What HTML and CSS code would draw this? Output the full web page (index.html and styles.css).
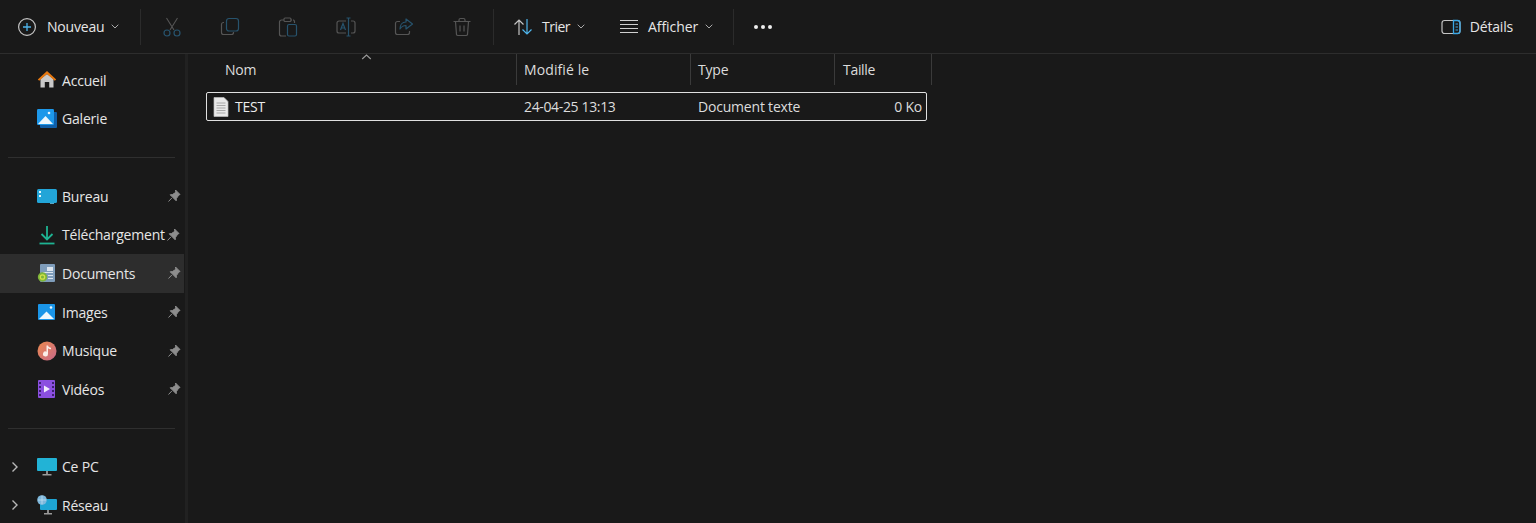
FILE: index.html
```html
<!DOCTYPE html>
<html lang="fr">
<head>
<meta charset="utf-8">
<title>Documents</title>
<link rel="stylesheet" href="styles.css">
</head>
<body>
<div class="app">
  <header class="toolbar">
    <button class="tb-new">
      <svg class="ico20" viewBox="0 0 20 20"><circle cx="10" cy="10" r="8.4" fill="none" stroke="#c4c4c4" stroke-width="1.2"/><path d="M10 6v8M6 10h8" stroke="#4fb4ea" stroke-width="1.3"/></svg>
      <span class="tb-label">Nouveau</span>
      <svg class="chev" viewBox="0 0 8 5"><path d="M.7.7 4 4l3.3-3.3" fill="none" stroke="#aaa" stroke-width="1"/></svg>
    </button>
    <span class="sep"></span>
    <div class="iconset">
      <button class="tb-icon"><svg class="ico20" viewBox="0 0 20 20"><path d="M4.5 1 12 13M15.500 1 8 13" fill="none" stroke="#555" stroke-width="1.1"/><circle cx="5" cy="16" r="3" fill="none" stroke="#27536d" stroke-width="1.2"/><circle cx="15" cy="16" r="3" fill="none" stroke="#27536d" stroke-width="1.2"/></svg></button>
      <button class="tb-icon"><svg class="ico20" viewBox="0 0 20 20"><path d="M4 5.500H3.500A2 2 0 0 0 1.500 7.500v8a2 2 0 0 0 2 2h8a2 2 0 0 0 2-2V15" fill="none" stroke="#555" stroke-width="1.200"/><rect x="6.500" y="1.500" width="12" height="12.500" rx="2.500" fill="none" stroke="#27536d" stroke-width="1.200"/></svg></button>
      <button class="tb-icon"><svg class="ico20" viewBox="0 0 20 20"><path d="M6 3H3.500a2 2 0 0 0-2 2v12a2 2 0 0 0 2 2H8M14 3h-1.500M15 3h.5a2 2 0 0 1 1 1.500V6" fill="none" stroke="#555" stroke-width="1.200"/><rect x="6" y="1" width="7" height="3.500" rx="1" fill="none" stroke="#555" stroke-width="1.100"/><rect x="9.500" y="7.500" width="9" height="11.500" rx="1.500" fill="none" stroke="#27536d" stroke-width="1.200"/></svg></button>
      <button class="tb-icon"><svg class="ico20" viewBox="0 0 20 20"><path d="M10 4H3A2 2 0 0 0 1 6v8a2 2 0 0 0 2 2h7M15 4h2a2 2 0 0 1 2 2v8a2 2 0 0 1-2 2h-2" fill="none" stroke="#555" stroke-width="1.200"/><path d="M10.500 1h4M12.500 1v18M10.500 19h4M4.500 13l2.500-6.500L9.500 13M5.300 11h3.400" fill="none" stroke="#27536d" stroke-width="1.200"/></svg></button>
      <button class="tb-icon"><svg class="ico20" viewBox="0 0 20 20"><path d="M6 4.500H3.500a2 2 0 0 0-2 2v9a2 2 0 0 0 2 2h10a2 2 0 0 0 2-2V14" fill="none" stroke="#555" stroke-width="1.200"/><path d="M12 2v3C8 5 6 8 6 12c1.500-2.500 3-3.500 6-3.500V12l6.500-5z" fill="none" stroke="#27536d" stroke-width="1.200" stroke-linejoin="round"/></svg></button>
      <button class="tb-icon"><svg class="ico20" viewBox="0 0 20 20"><path d="M1.500 4.500h17M7 4.500V3a1.500 1.500 0 0 1 1.500-1.500h3A1.500 1.500 0 0 1 13 3v1.500M3.500 4.500l1 13a1.500 1.500 0 0 0 1.500 1h8a1.500 1.500 0 0 0 1.500-1l1-13M8 8.500v6M12 8.500v6" fill="none" stroke="#555" stroke-width="1.200"/></svg></button>
    </div>
    <span class="sep"></span>
    <button class="tb-btn tb-sort">
      <svg class="ico20" viewBox="0 0 20 20"><path d="M6 18V3M1.500 7.500 6 3l4.500 4.500" fill="none" stroke="#c4c4c4" stroke-width="1.200"/><path d="M14 2v15M9.500 12.500 14 17l4.500-4.500" fill="none" stroke="#4fb4ea" stroke-width="1.200"/></svg>
      <span class="tb-label tb-label-sort">Trier</span>
      <svg class="chev" viewBox="0 0 8 5"><path d="M.7.7 4 4l3.300-3.300" fill="none" stroke="#aaa" stroke-width="1"/></svg>
    </button>
    <button class="tb-btn tb-view">
      <svg class="ico20" viewBox="0 0 20 20"><path d="M1 3.500h18M1 7.500h18M1 11.500h18M1 15.500h18" stroke="#d0d0d0" stroke-width="1.200"/></svg>
      <span class="tb-label tb-label-view">Afficher</span>
      <svg class="chev" viewBox="0 0 8 5"><path d="M.7.7 4 4l3.300-3.300" fill="none" stroke="#aaa" stroke-width="1"/></svg>
    </button>
    <span class="sep"></span>
    <button class="tb-more"><span class="dot"></span><span class="dot"></span><span class="dot"></span></button>
    <button class="tb-details">
      <svg class="ico20" viewBox="0 0 20 20"><rect x="1" y="3.500" width="18" height="13" rx="2.500" fill="none" stroke="#c4c4c4" stroke-width="1.200"/><path d="M12.500 3.500h4A2.500 2.500 0 0 1 19 6v8a2.500 2.500 0 0 1-2.500 2.500h-4z" fill="none" stroke="#3aa6e4" stroke-width="1.300"/><path d="M14.500 7h2.500M14.500 10h2.500M14.500 13h2.500" stroke="#3aa6e4"/></svg>
      <span class="tb-label">Détails</span>
    </button>
  </header>

  <div class="body">
    <nav class="side">
      <ul class="nav-list">
        <li class="nav-row"><span class="twist"></span><svg class="nav-ico" viewBox="0 0 20 20"><path d="M3.500 9 10 4l6.500 5v8.500h-4.300V12H7.800v5.500H3.500z" fill="#c9c9c9"/><path d="M10 1 .8 9.500l1.400 1.300L10 4l7.800 6.800 1.400-1.300z" fill="#e8780f"/></svg><span class="nav-text">Accueil</span></li>
        <li class="nav-row"><span class="twist"></span><svg class="nav-ico" viewBox="0 0 20 20"><rect x="3" y="3" width="17" height="16" rx="1" fill="#0f5ea8"/><rect x="0" y="0" width="17" height="16" rx="1.200" fill="#1d98ea"/><path d="M1 15 8.500 7 16 15z" fill="#eef7fd"/><circle cx="12" cy="4" r="1.300" fill="#eef7fd"/></svg><span class="nav-text">Galerie</span></li>
      </ul>
      <hr class="nav-div">
      <ul class="nav-list">
        <li class="nav-row"><span class="twist"></span><svg class="nav-ico" viewBox="0 0 20 20"><rect x="0" y="3" width="20" height="14" rx="1.500" fill="#22a5d8"/><rect x="2" y="5" width="2" height="2" fill="#e6f7fd"/><rect x="2" y="9" width="2" height="2" fill="#e6f7fd"/><rect x="13" y="17" width="4" height="1" fill="#5ba6c2"/></svg><span class="nav-text">Bureau</span><svg class="pin" viewBox="0 0 14 14"><use href="#pin"/></svg></li>
        <li class="nav-row"><span class="twist"></span><svg class="nav-ico" viewBox="0 0 20 20"><path d="M10 1v13M4.500 9 10 14.500 15.500 9" fill="none" stroke="#1eb392" stroke-width="1.800"/><path d="M2.500 18.500h15" stroke="#1eb392" stroke-width="1.800"/></svg><span class="nav-text">Téléchargement</span><svg class="pin pin-tight" viewBox="0 0 14 14"><use href="#pin"/></svg></li>
        <li class="nav-row is-active"><span class="twist"></span><svg class="nav-ico" viewBox="0 0 20 20"><rect x="3" y="1" width="15" height="18" rx="1" fill="#7f9dbb"/><path d="M10 4h6v4h-6zM6 9h10v1H6zM11 12h5v1h-5zM11 15h5v1h-5z" fill="#dde6ef"/><circle cx="5.500" cy="14" r="4.700" fill="#7eb53a"/><circle cx="5.500" cy="14" r="2.200" fill="none" stroke="#d4e24a" stroke-width="1.300"/></svg><span class="nav-text">Documents</span><svg class="pin" viewBox="0 0 14 14"><use href="#pin"/></svg></li>
        <li class="nav-row"><span class="twist"></span><svg class="nav-ico" viewBox="0 0 20 20"><rect x="1" y="2" width="17" height="16" rx="1" fill="#1a95e8"/><path d="M2 17 9.500 9.500 17 17z" fill="#eef7fd"/><circle cx="14" cy="5.500" r="1.300" fill="#eef7fd"/></svg><span class="nav-text">Images</span><svg class="pin" viewBox="0 0 14 14"><use href="#pin"/></svg></li>
        <li class="nav-row"><span class="twist"></span><svg class="nav-ico" viewBox="0 0 20 20"><defs><linearGradient id="mus" x1="0" y1="0" x2="1" y2="1"><stop offset="0" stop-color="#ec8a4e"/><stop offset="1" stop-color="#c7688a"/></linearGradient></defs><circle cx="10" cy="10" r="9.500" fill="url(#mus)"/><path d="M9.500 4.500h1.500c.3 1.500 1.500 2 3 2.300v1.500c-1.300 0-2.300-.4-3-1V13a2.500 2.500 0 1 1-1.500-2.300z" fill="#fbeee8"/></svg><span class="nav-text">Musique</span><svg class="pin" viewBox="0 0 14 14"><use href="#pin"/></svg></li>
        <li class="nav-row"><span class="twist"></span><svg class="nav-ico" viewBox="0 0 20 20"><rect x="1" y="1" width="17" height="18" rx="1" fill="#8b4fe0"/><path d="M2 3h2v2H2zM2 7h2v2H2zM2 11h2v2H2zM2 15h2v2H2zM15 3h2v2h-2zM15 7h2v2h-2zM15 11h2v2h-2zM15 15h2v2h-2z" fill="#3d2070"/><path d="M7 6.500 13 10l-6 3.500z" fill="#f0eafc"/></svg><span class="nav-text">Vidéos</span><svg class="pin" viewBox="0 0 14 14"><use href="#pin"/></svg></li>
      </ul>
      <hr class="nav-div">
      <ul class="nav-list">
        <li class="nav-row"><svg class="twist" viewBox="0 0 8 12"><path d="M1.500 1.500 6 6l-4.500 4.500" fill="none" stroke="#b8b8b8" stroke-width="1.400"/></svg><svg class="nav-ico" viewBox="0 0 20 20"><rect x="0" y="1" width="20" height="13" rx="1" fill="#22b3d6"/><rect x="9" y="14" width="2" height="3" fill="#8a8a8a"/><rect x="5.500" y="17" width="9" height="1.500" fill="#9a9a9a"/></svg><span class="nav-text">Ce PC</span></li>
        <li class="nav-row"><svg class="twist" viewBox="0 0 8 12"><path d="M1.500 1.500 6 6l-4.500 4.500" fill="none" stroke="#b8b8b8" stroke-width="1.400"/></svg><svg class="nav-ico" viewBox="0 0 20 20"><rect x="3" y="4" width="17" height="11" rx="1" fill="#1ea5d4"/><rect x="10" y="15" width="2" height="3" fill="#8a8a8a"/><rect x="7" y="18" width="8" height="1.500" fill="#9a9a9a"/><circle cx="5" cy="5" r="4.800" fill="#7eb8dc"/><path d="M1 5h8M5 .5v9" stroke="#c7e2f3" stroke-width=".7"/></svg><span class="nav-text">Réseau</span></li>
      </ul>
    </nav>

    <main class="content">
      <div class="col-head">
        <div class="col col-name">Nom</div>
        <div class="col col-date">Modifié le</div>
        <div class="col">Type</div>
        <div class="col col-size">Taille</div>
        <svg class="sort-caret" viewBox="0 0 10 6"><path d="M.7 5 5 1l4.300 4" fill="none" stroke="#9a9a9a" stroke-width="1.100"/></svg>
      </div>
      <div class="file-row">
        <div class="cell cell-name"><svg class="file-ico" viewBox="0 0 16 20"><path d="M1 .5h10L15 4.500V19.500H1z" fill="#e9e9e9" stroke="#bdbdbd" stroke-width=".7"/><path d="M3.500 6h9M3.500 8.500h9M3.500 11h9M3.500 13.500h9M3.500 16h9" stroke="#a8a8a8" stroke-width="1"/></svg><span>TEST</span></div>
        <div class="cell cell-date">24-04-25 13:13</div>
        <div class="cell">Document texte</div>
        <div class="cell cell-size">0 Ko</div>
      </div>
    </main>
  </div>
</div>
<svg class="defs" aria-hidden="true"><symbol id="pin" viewBox="0 0 14 14"><path d="M8.500 1 13 5.500l-1.300.6-2.300 3.500-.2 2.200-6-6 2.200-.2 3.500-2.300zM4.800 9 1.500 12.500" fill="#8d8d8d" stroke="#8d8d8d" stroke-width="1"/></symbol></svg>
</body>
</html>
```
FILE: styles.css
```css
* { box-sizing: border-box; }
html, body { margin: 0; height: 100%; }
body {
  background: #191919;
  color: #e6e6e6;
  font-family: "Open Sans", "Noto Sans", sans-serif;
  font-size: 14px;
  overflow: hidden;
}
button {
  background: none;
  border: 0;
  color: inherit;
  font: inherit;
  padding: 0;
  display: flex;
  align-items: center;
}
ul { list-style: none; margin: 0; padding: 0; }
.defs { width: 0; height: 0; position: absolute; }
.app { display: flex; flex-direction: column; height: 523px; }

.toolbar {
  height: 54px;
  flex: none;
  display: flex;
  align-items: center;
  border-bottom: 1px solid #2d2d2d;
}
.ico20 { width: 20px; height: 20px; flex: none; }
.chev { width: 8px; height: 5px; flex: none; }
.sep { width: 1px; height: 36px; background: #2b2b2b; flex: none; }
.tb-label { white-space: nowrap; letter-spacing: -0.2px; }
.tb-label-sort { letter-spacing: -0.5px; }
.tb-label-view { letter-spacing: -0.05px; }

.tb-new { width: 140px; padding-left: 17px; }
.tb-new .tb-label { margin-left: 10px; }
.tb-new .chev { margin-left: 7px; }
.iconset { display: flex; margin: 0 2px; }
.tb-icon { width: 58px; justify-content: center; }
.tb-btn .tb-label { margin-left: 9px; }
.tb-btn .chev { margin-left: 7px; }
.tb-sort { width: 116px; padding-left: 19px; }
.tb-view { width: 123px; padding-left: 9px; }
.tb-more { width: 58px; justify-content: center; gap: 3px; margin-left: 0; }
.dot { width: 4px; height: 4px; border-radius: 50%; background: #eee; }
.tb-details { margin-left: auto; padding-right: 23px; }
.tb-details .tb-label { margin-left: 9px; }

.body { flex: 1; display: flex; min-height: 0; }
.side {
  width: 188px;
  flex: none;
  border-right: 3px solid #212121;
  padding-top: 7px;
}
.nav-row {
  height: 38.6px;
  width: 184px;
  display: flex;
  align-items: center;
  padding-left: 11px;
  position: relative;
}
.twist { width: 8px; height: 12px; flex: none; margin-right: 18px; }
.nav-ico { width: 20px; height: 20px; flex: none; }
.nav-text { margin-left: 5px; white-space: nowrap; letter-spacing: -0.2px; }
.pin { width: 14px; height: 14px; margin-left: auto; margin-right: 3px; flex: none; }
.pin-tight { margin-right: 3px; margin-left: 1px; }
.is-active { background: #2d2d2d; }
.nav-div {
  border: 0;
  height: 1px;
  background: #2f2f2f;
  width: 167px;
  margin: 19px 0 18.800px 8px;
}

.content { flex: 1; min-width: 0; }
.col-head {
  display: grid;
  grid-template-columns: 329px 174px 144px 97px;
  height: 31px;
  width: 744px;
  position: relative;
}
.col {
  border-right: 1px solid #3a3a3a;
  padding-left: 7px;
  display: flex;
  align-items: center;
  color: #dcdcdc;
  letter-spacing: -0.2px;
}
.col-date { letter-spacing: 0.1px; }
.col-size { padding-left: 8px; letter-spacing: -0.3px; }
.col-name { padding-left: 37px; }
.sort-caret { position: absolute; left: 173px; top: 0; width: 11px; height: 6px; }
.file-row {
  display: grid;
  grid-template-columns: 311px 174px 144px 1fr;
  width: 721px;
  height: 29px;
  margin: 7px 0 0 18px;
  border: 1px solid #e0e0e0;
  border-radius: 2px;
  align-items: center;
}
.cell { padding-left: 6px; white-space: nowrap; color: #dcdcdc; letter-spacing: -0.2px; }
.cell-name { display: flex; align-items: center; padding-left: 6px; color: #ececec; }
.cell-date { letter-spacing: -0.35px; }
.file-ico { width: 16px; height: 20px; margin-right: 6px; flex: none; }
.cell-size { padding: 0 4px 0 0; text-align: right; }
```
